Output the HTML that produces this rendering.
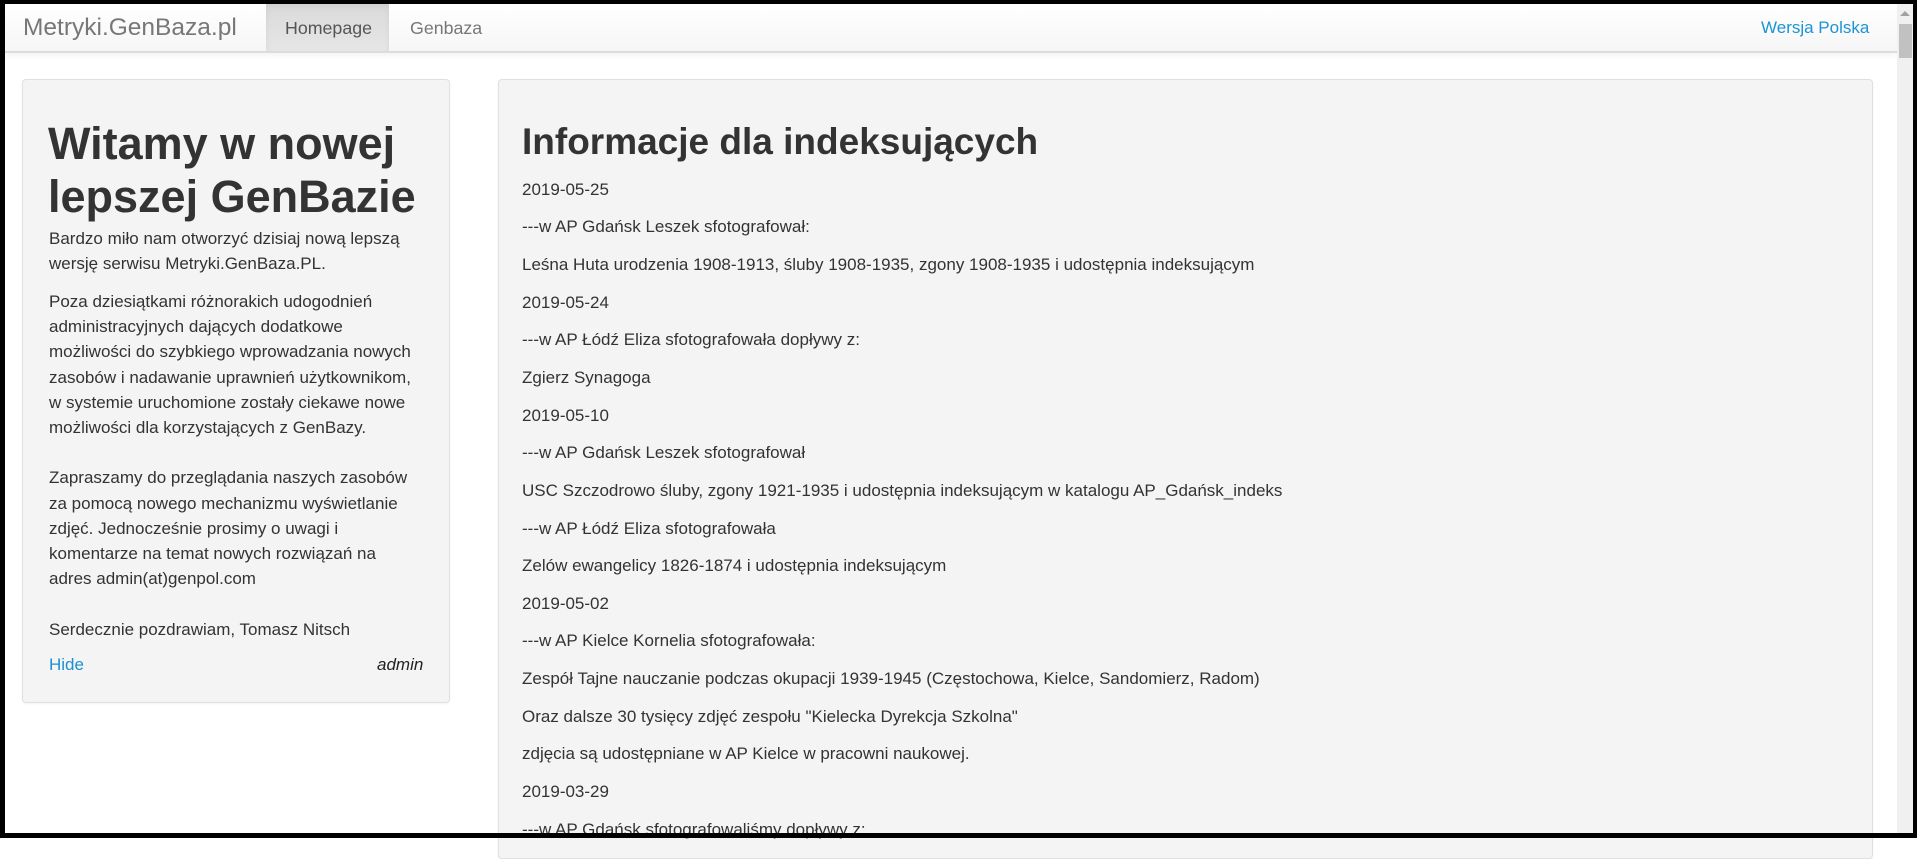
<!DOCTYPE html>
<html><head><meta charset="utf-8">
<style>
*{box-sizing:border-box;margin:0;padding:0}
html,body{width:1917px;height:841px;overflow:hidden;background:#fff;font-family:"Liberation Sans",Arial,sans-serif;color:#333}
.abs{position:absolute;white-space:nowrap}
.nav{position:absolute;left:5px;top:4px;width:1892px;height:49px;background:linear-gradient(#fff,#f6f6f6);border-bottom:2px solid #dcdcdc;box-shadow:0 2px 6px rgba(0,0,0,.06)}
.panel{position:absolute;background:#f4f4f4;border:1px solid #e0e0e0;border-radius:4px;box-shadow:0 1px 2px rgba(0,0,0,.05)}
.t{font-size:17px;line-height:25.2px}
.r{font-size:17px;line-height:37.65px;left:522px}
a{color:#1c8fd1;text-decoration:none}
</style></head><body>
<div class="nav">
 <div class="abs" style="left:18px;top:0;line-height:48px;font-size:24.5px;color:#777">Metryki.GenBaza.pl</div>
 <div class="abs" style="left:261px;top:0;width:123px;height:47px;background:linear-gradient(#dadada,#e6e6e6);box-shadow:inset 0 3px 7px rgba(0,0,0,.06)"></div>
 <div class="abs" style="left:280px;top:0;line-height:49px;font-size:17.8px;color:#555">Homepage</div>
 <div class="abs" style="left:405px;top:0;line-height:49px;font-size:17.8px;color:#777">Genbaza</div>
 <div class="abs" style="left:1756px;top:0;line-height:47px;font-size:17px;color:#1c94d2">Wersja Polska</div>
</div>
<div class="abs" style="left:1897px;top:4px;width:16px;height:829px;background:#f0f0f0"></div>
<div class="abs" style="left:1899px;top:24px;width:13px;height:34px;background:#c1c1c1"></div>
<div class="abs" style="left:1900px;top:11px;width:0;height:0;border-left:5px solid transparent;border-right:5px solid transparent;border-bottom:5px solid #a0a0a0"></div>

<div class="panel" style="left:22px;top:79px;width:428px;height:624px"></div>
<div class="abs" style="left:48px;top:117px;font-size:45px;font-weight:bold;line-height:53px;color:#333">Witamy w nowej<br>lepszej GenBazie</div>
<div class="abs t" style="left:49px;top:225.8px">Bardzo miło nam otworzyć dzisiaj nową lepszą<br>wersję serwisu Metryki.GenBaza.PL.</div>
<div class="abs t" style="left:49px;top:289px">Poza dziesiątkami różnorakich udogodnień<br>administracyjnych dających dodatkowe<br>możliwości do szybkiego wprowadzania nowych<br>zasobów i nadawanie uprawnień użytkownikom,<br>w systemie uruchomione zostały ciekawe nowe<br>możliwości dla korzystających z GenBazy.<br><br>Zapraszamy do przeglądania naszych zasobów<br>za pomocą nowego mechanizmu wyświetlanie<br>zdjęć. Jednocześnie prosimy o uwagi i<br>komentarze na temat nowych rozwiązań na<br>adres admin(at)genpol.com<br><br>Serdecznie pozdrawiam, Tomasz Nitsch</div>
<div class="abs t" style="left:49px;top:652px"><a>Hide</a></div>
<div class="abs t" style="left:377px;top:652px;font-style:italic;color:#222">admin</div>

<div class="panel" style="left:498px;top:79px;width:1375px;height:780px"></div>
<div class="abs" style="left:522px;top:120px;font-size:37px;font-weight:bold;line-height:44px">Informacje dla indeksujących</div>
<div class="abs" style="left:0;top:170.7px;width:1800px">
<div class="abs r" style="top:0px">2019-05-25</div>
<div class="abs r" style="top:37.65px">---w AP Gdańsk Leszek sfotografował:</div>
<div class="abs r" style="top:75.3px">Leśna Huta urodzenia 1908-1913, śluby 1908-1935, zgony 1908-1935 i udostępnia indeksującym</div>
<div class="abs r" style="top:112.95px">2019-05-24</div>
<div class="abs r" style="top:150.6px">---w AP Łódź Eliza sfotografowała dopływy z:</div>
<div class="abs r" style="top:188.25px">Zgierz Synagoga</div>
<div class="abs r" style="top:225.9px">2019-05-10</div>
<div class="abs r" style="top:263.55px">---w AP Gdańsk Leszek sfotografował</div>
<div class="abs r" style="top:301.2px">USC Szczodrowo śluby, zgony 1921-1935 i udostępnia indeksującym w katalogu AP_Gdańsk_indeks</div>
<div class="abs r" style="top:338.85px">---w AP Łódź Eliza sfotografowała</div>
<div class="abs r" style="top:376.5px">Zelów ewangelicy 1826-1874 i udostępnia indeksującym</div>
<div class="abs r" style="top:414.15px">2019-05-02</div>
<div class="abs r" style="top:451.8px">---w AP Kielce Kornelia sfotografowała:</div>
<div class="abs r" style="top:489.45px">Zespół Tajne nauczanie podczas okupacji 1939-1945 (Częstochowa, Kielce, Sandomierz, Radom)</div>
<div class="abs r" style="top:527.1px">Oraz dalsze 30 tysięcy zdjęć zespołu "Kielecka Dyrekcja Szkolna"</div>
<div class="abs r" style="top:564.75px">zdjęcia są udostępniane w AP Kielce w pracowni naukowej.</div>
<div class="abs r" style="top:602.4px">2019-03-29</div>
<div class="abs r" style="top:640.05px">---w AP Gdańsk sfotografowaliśmy dopływy z:</div>
</div>

<div class="abs" style="left:0;top:0;width:1917px;height:4px;background:#000"></div>
<div class="abs" style="left:0;top:0;width:5px;height:838px;background:#000"></div>
<div class="abs" style="left:1913px;top:0;width:4px;height:838px;background:#000"></div>
<div class="abs" style="left:0;top:833px;width:1917px;height:5px;background:#000"></div>
</body></html>
